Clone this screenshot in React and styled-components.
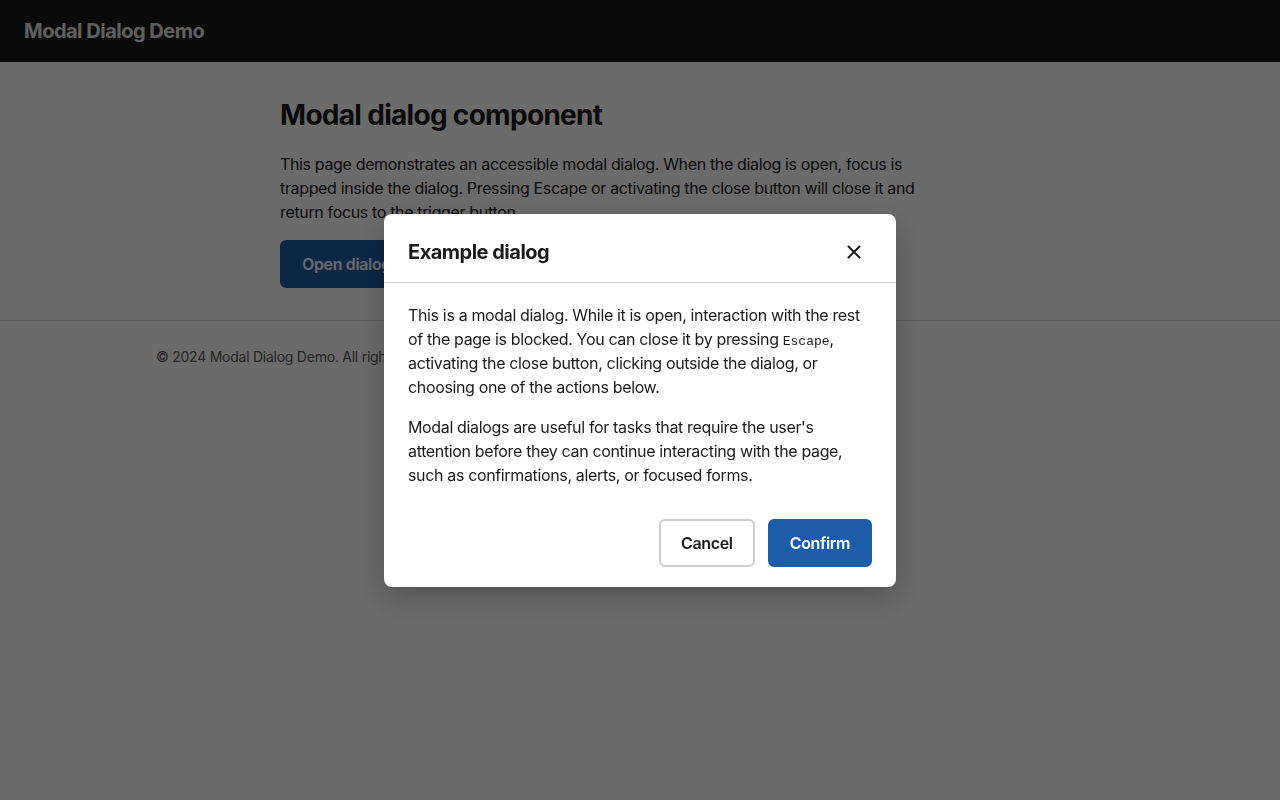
import React, { useState } from "react";
import styled, { createGlobalStyle } from "styled-components";

const GlobalStyle = createGlobalStyle`
  * { box-sizing: border-box; }
  html, body { margin: 0; padding: 0; }
  body {
    font-family: Inter, "Noto Sans", "Liberation Sans", sans-serif;
    color: #1a1a1a;
    background: #ffffff;
    letter-spacing: -0.35px;
  }
`;

const Page = styled.div`
  min-height: 800px;
  display: flex;
  flex-direction: column;
`;

const TopBar = styled.header`
  height: 62px;
  background: #1a1a1a;
  display: flex;
  align-items: center;
  padding: 0 24px;
`;

const Brand = styled.div`
  color: #e2e2e2;
  font-size: 20px;
  font-weight: 700;
  letter-spacing: -0.5px;
`;

const Main = styled.main`
  width: 720px;
  margin: 0 auto;
  padding: 36px 0 32px;
`;

const Title = styled.h1`
  margin: 0 0 20px;
  font-size: 28px;
  line-height: 34px;
  font-weight: 700;
  letter-spacing: -0.7px;
`;

const Lead = styled.p`
  margin: 0 0 16px;
  max-width: 640px;
  font-size: 16px;
  line-height: 24px;
`;

const Button = styled.button`
  height: 48px;
  padding: 0 20px;
  border-radius: 6px;
  font-family: inherit;
  font-size: 16px;
  font-weight: 600;
  letter-spacing: -0.35px;
  cursor: pointer;
  border: 2px solid ${(p) => (p.$variant === "outline" ? "#cccccc" : "#1d5ca8")};
  background: ${(p) => (p.$variant === "outline" ? "#ffffff" : "#1d5ca8")};
  color: ${(p) => (p.$variant === "outline" ? "#1a1a1a" : "#ffffff")};
`;

const Footer = styled.footer`
  border-top: 1px solid #dddddd;
`;

const FooterInner = styled.div`
  max-width: 968px;
  margin: 0 auto;
  padding: 25px 0;
  font-size: 14px;
  line-height: 21px;
  color: #555555;
  letter-spacing: -0.25px;
`;

const Overlay = styled.div`
  position: fixed;
  inset: 0;
  background: rgba(0, 0, 0, 0.58);
  display: flex;
  align-items: center;
  justify-content: center;
`;

const Dialog = styled.div`
  width: 512px;
  background: #ffffff;
  border-radius: 8px;
  box-shadow: 0 10px 30px rgba(0, 0, 0, 0.25);
  overflow: hidden;
`;

const DialogHeader = styled.div`
  display: flex;
  align-items: center;
  justify-content: space-between;
  padding: 24px 24px 16px;
  border-bottom: 1px solid #d4d4d4;
`;

const DialogTitle = styled.h2`
  margin: 0;
  font-size: 20px;
  line-height: 28px;
  font-weight: 700;
  letter-spacing: -0.5px;
`;

const CloseButton = styled.button`
  width: 36px;
  height: 36px;
  margin: -4px 0;
  border: none;
  background: transparent;
  display: flex;
  align-items: center;
  justify-content: center;
  cursor: pointer;
  color: #1a1a1a;
  padding: 0;
`;

const DialogBody = styled.div`
  padding: 20px 24px;
  p {
    margin: 0 0 16px;
    font-size: 16px;
    line-height: 24px;
  }
  p:last-child { margin-bottom: 0; }
`;

const Kbd = styled.code`
  font-family: "Liberation Mono", "DejaVu Sans Mono", monospace;
  font-size: 13px;
  line-height: 1;
  letter-spacing: 0;
`;

const DialogActions = styled.div`
  display: flex;
  justify-content: flex-end;
  gap: 13px;
  padding: 12px 24px 20px;
`;

export default function App() {
  const [open, setOpen] = useState(true);

  return (
    <>
      <GlobalStyle />
      <Page>
        <TopBar>
          <Brand>Modal Dialog Demo</Brand>
        </TopBar>
        <Main>
          <Title>Modal dialog component</Title>
          <Lead>
            This page demonstrates an accessible modal dialog. When the dialog is open, focus is
            trapped inside the dialog. Pressing Escape or activating the close button will close it
            and return focus to the trigger button.
          </Lead>
          <Button onClick={() => setOpen(true)}>Open dialog</Button>
        </Main>
        <Footer>
          <FooterInner>© 2024 Modal Dialog Demo. All rights reserved.</FooterInner>
        </Footer>
      </Page>

      {open && (
        <Overlay onClick={() => setOpen(false)}>
          <Dialog role="dialog" aria-modal="true" onClick={(e) => e.stopPropagation()}>
            <DialogHeader>
              <DialogTitle>Example dialog</DialogTitle>
              <CloseButton aria-label="Close" onClick={() => setOpen(false)}>
                <svg width="14" height="14" viewBox="0 0 14 14" fill="none">
                  <path d="M1.5 1.5L12.5 12.5M12.5 1.5L1.5 12.5" stroke="currentColor" strokeWidth="2" strokeLinecap="round" />
                </svg>
              </CloseButton>
            </DialogHeader>
            <DialogBody>
              <p>
                This is a modal dialog. While it is open, interaction with the rest of the page is
                blocked. You can close it by pressing <Kbd>Escape</Kbd>, activating the close
                button, clicking outside the dialog, or choosing one of the actions below.
              </p>
              <p>
                Modal dialogs are useful for tasks that require the user's attention before they can
                continue interacting with the page, such as confirmations, alerts, or focused forms.
              </p>
            </DialogBody>
            <DialogActions>
              <Button $variant="outline" onClick={() => setOpen(false)}>Cancel</Button>
              <Button onClick={() => setOpen(false)}>Confirm</Button>
            </DialogActions>
          </Dialog>
        </Overlay>
      )}
    </>
  );
}
